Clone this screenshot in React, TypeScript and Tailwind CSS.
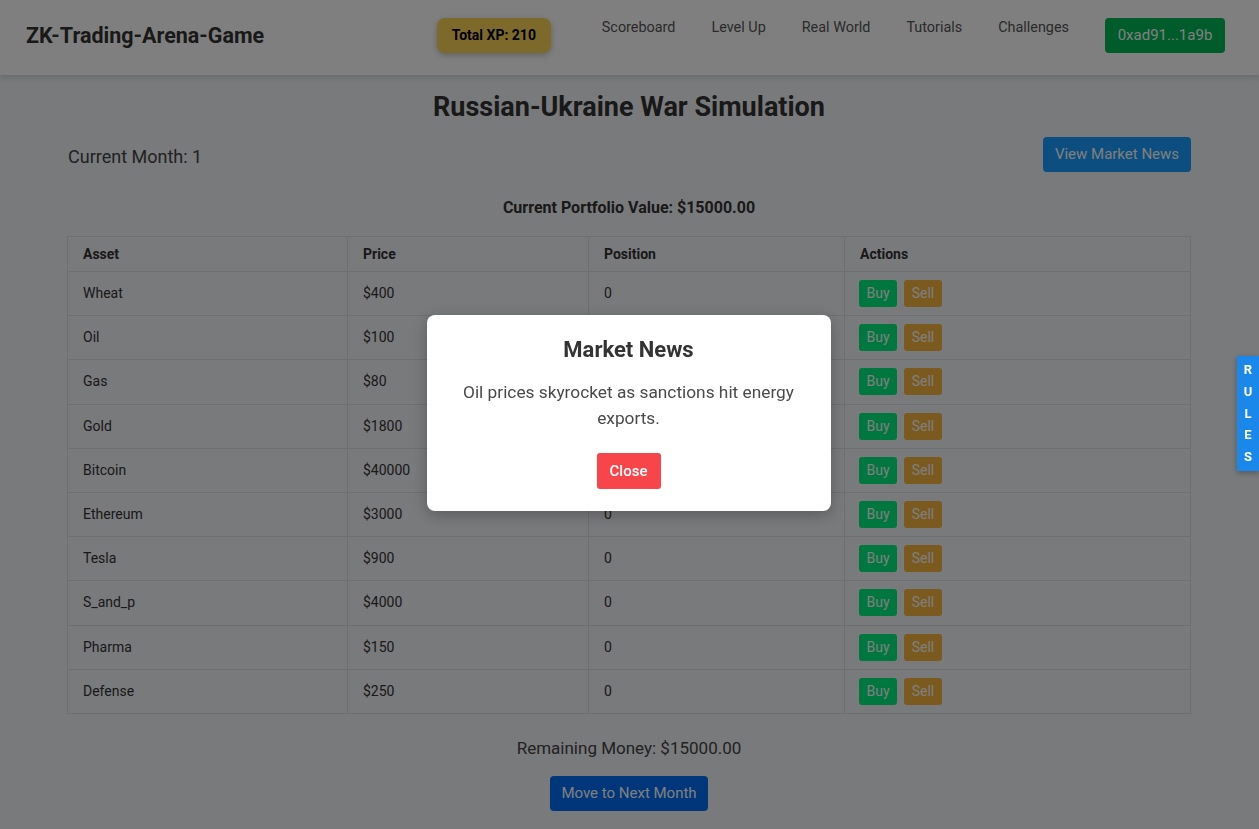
import React from "react";

const assets: [string, string][] = [
  ["Wheat", "$400"],
  ["Oil", "$100"],
  ["Gas", "$80"],
  ["Gold", "$1800"],
  ["Bitcoin", "$40000"],
  ["Ethereum", "$3000"],
  ["Tesla", "$900"],
  ["S_and_p", "$4000"],
  ["Pharma", "$150"],
  ["Defense", "$250"],
];

export default function App() {
  return (
    <div
      className="min-h-[829px] bg-[#f2f4f8] text-[#333]"
      style={{ fontFamily: "Roboto, 'Liberation Sans', Arial, sans-serif" }}
    >
      <header className="flex h-[75px] items-center justify-between bg-white pl-[26px] pr-[34px] shadow-[0_2px_6px_rgba(0,0,0,0.15)]">
        <div className="pb-[3px] text-[21.5px] font-bold text-[#333]">ZK-Trading-Arena-Game</div>
        <div className="flex items-center gap-[36px] pb-[4px]">
          <div className="mr-[15px] flex h-[35px] w-[114px] items-center justify-center rounded-lg bg-[#fad454] text-[14px] font-bold text-black shadow-[0_2px_6px_rgba(0,0,0,0.25)]">
            Total XP: 210
          </div>
          {["Scoreboard", "Level Up", "Real World", "Tutorials", "Challenges"].map((l) => (
            <a key={l} className="pb-[15px] text-[14.4px] leading-[18px] text-[#555]">
              {l}
            </a>
          ))}
          <button className="flex h-[35px] w-[120px] items-center justify-center rounded bg-[#00b854] text-[15px] text-white">
            0xad91...1a9b
          </button>
        </div>
      </header>

      <main className="w-full pl-[67px] pr-[68px]">
        <h1 className="mt-[17px] text-center text-[27px] font-bold leading-[30px] text-[#333]">
          Russian-Ukraine War Simulation
        </h1>
        <div className="mt-[15px] flex items-center justify-between">
          <div className="pl-px pt-[3px] text-[18px] text-[#444]">Current Month: 1</div>
          <button className="flex h-[35px] w-[148px] items-center justify-center rounded bg-[#169cff] text-[15px] text-white">
            View Market News
          </button>
        </div>
        <div className="mt-[26px] text-center text-[16px] font-bold leading-[20px] text-[#333]">
          Current Portfolio Value: $15000.00
        </div>
        <table className="mt-[18px] w-full border-collapse text-[14px] text-[#333]">
          <thead>
            <tr className="h-[35px]">
              <th className="w-[280px] border border-[#dcdee2] pl-[15px] text-left font-bold">Asset</th>
              <th className="w-[241px] border border-[#dcdee2] pl-[15px] text-left font-bold">Price</th>
              <th className="w-[256px] border border-[#dcdee2] pl-[15px] text-left font-bold">Position</th>
              <th className="border border-[#dcdee2] pl-[15px] text-left font-bold">Actions</th>
            </tr>
          </thead>
          <tbody>
            {assets.map(([name, price]) => (
              <tr key={name} className="h-[44.2px]">
                <td className="border border-[#dcdee2] pl-[15px]">{name}</td>
                <td className="border border-[#dcdee2] pl-[15px]">{price}</td>
                <td className="border border-[#dcdee2] pl-[15px]">0</td>
                <td className="border border-[#dcdee2] pl-[14px]">
                  <div className="flex gap-[7px]">
                    <button className="flex h-[27px] w-[38px] items-center justify-center rounded-[3px] bg-[#00ee7e] text-[14px] text-white">
                      Buy
                    </button>
                    <button className="flex h-[27px] w-[38px] items-center justify-center rounded-[3px] bg-[#f4b43e] text-[14px] text-white">
                      Sell
                    </button>
                  </div>
                </td>
              </tr>
            ))}
          </tbody>
        </table>
        <div className="mt-[23px] text-center text-[17px] leading-[22px] text-[#444]">
          Remaining Money: $15000.00
        </div>
        <div className="mt-[17px] flex justify-center pb-[18px]">
          <button className="flex h-[35px] w-[158px] items-center justify-center rounded bg-[#006cf4] text-[15px] text-white">
            Move to Next Month
          </button>
        </div>
      </main>

      <div className="fixed inset-0 z-40 flex items-center justify-center bg-black/50">
        <div className="-mt-[3px] ml-[-2px] w-[404px] rounded-lg bg-white px-6 pb-[22px] pt-[22px] text-center shadow-[0_4px_16px_rgba(0,0,0,0.25)]">
          <h2 className="text-[22px] font-bold leading-[26px] text-[#333]">Market News</h2>
          <p className="mt-4 px-[8px] text-[17.3px] leading-[26px] text-[#4a4a4a]">
            Oil prices skyrocket as sanctions hit energy exports.
          </p>
          <button className="mx-auto mt-[22px] flex h-[36px] w-[64px] items-center justify-center rounded-[3px] bg-[#f8454a] text-[15px] font-medium text-white">
            Close
          </button>
        </div>
      </div>

      <div className="fixed right-0 top-1/2 z-50 flex h-[115px] w-[22px] -translate-y-[59px] flex-col items-center justify-center gap-[4.7px] bg-[#1a87eb] text-[13px] font-bold leading-[17px] text-white shadow-[0_2px_6px_rgba(0,0,0,0.3)]">
        {"RULES".split("").map((c, i) => (
          <span key={i}>{c}</span>
        ))}
      </div>
    </div>
  );
}
